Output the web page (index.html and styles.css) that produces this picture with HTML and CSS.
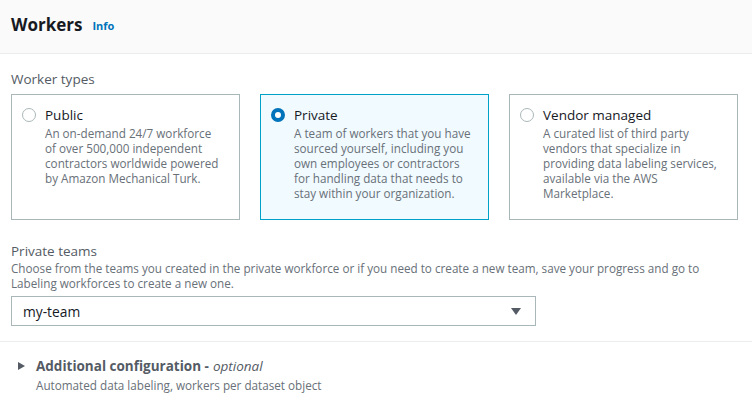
FILE: index.html
```html
<!DOCTYPE html>
<html lang="en">
<head>
<meta charset="utf-8">
<title>Workers</title>
<link rel="stylesheet" href="styles.css">
</head>
<body>
<div class="header">
  <h2 class="title">Workers</h2>
  <a class="info" href="#">Info</a>
</div>
<div class="content">
  <div class="label">Worker types</div>
  <div class="cards">
    <div class="card">
      <span class="radio"></span>
      <div class="card-body">
        <div class="card-title">Public</div>
        <div class="card-desc">An on-demand 24/7 workforce<br>of over 500,000 independent<br>contractors worldwide powered<br>by Amazon Mechanical Turk.</div>
      </div>
    </div>
    <div class="card selected">
      <span class="radio checked"></span>
      <div class="card-body">
        <div class="card-title">Private</div>
        <div class="card-desc">A team of workers that you have<br>sourced yourself, including you<br>own employees or contractors<br>for handling data that needs to<br>stay within your organization.</div>
      </div>
    </div>
    <div class="card">
      <span class="radio"></span>
      <div class="card-body">
        <div class="card-title">Vendor managed</div>
        <div class="card-desc">A curated list of third party<br>vendors that specialize in<br>providing data labeling services,<br>available via the AWS<br>Marketplace.</div>
      </div>
    </div>
  </div>
  <div class="label teams-label">Private teams</div>
  <div class="hint">Choose from the teams you created in the private workforce or if you need to create a new team, save your progress and go to<br>Labeling workforces to create a new one.</div>
  <div class="select">
    <span>my-team</span>
    <span class="caret-down"></span>
  </div>
</div>
<div class="expander">
  <div class="exp-title"><span class="caret-right"></span>Additional configuration - <em>optional</em></div>
  <div class="exp-desc">Automated data labeling, workers per dataset object</div>
</div>
</body>
</html>
```
FILE: styles.css
```css
* { box-sizing: border-box; }
body {
  margin: 0;
  font-family: "Open Sans", "Noto Sans", Arial, sans-serif;
  color: #16191f;
  background: #fff;
}
.header {
  height: 54px;
  display: flex;
  align-items: center;
  padding: 0 11px 4px;
  background: #fafafa;
  border-bottom: 1px solid #eaeded;
}
.title {
  margin: 0;
  font-size: 17px;
  font-weight: 700;
  line-height: 22px;
  color: #16191f;
}
.info {
  margin-left: 10px;
  margin-top: 2px;
  font-size: 11px;
  font-weight: 700;
  color: #0073bb;
  text-decoration: none;
}
.content {
  padding: 16px 14px 15px 11px;
  border-bottom: 1px solid #eaeded;
}
.label {
  font-size: 13.5px;
  line-height: 18px;
  color: #545b64;
}
.cards {
  display: grid;
  grid-template-columns: repeat(3, 1fr);
  gap: 20px;
  margin-top: 6px;
}
.card {
  display: flex;
  border: 1px solid #aab7b8;
  padding: 11px 6px 18px 10px;
}
.card.selected {
  border-color: #00a1c9;
  background: #f1faff;
}
.radio {
  flex: none;
  width: 14px;
  height: 14px;
  margin-top: 2px;
  border: 1px solid #aab7b8;
  border-radius: 50%;
  background: #fff;
}
.radio.checked {
  border: 4px solid #0073bb;
}
.card-body {
  margin-left: 9px;
}
.card-title {
  font-size: 13.5px;
  line-height: 18px;
  color: #16191f;
}
.card-desc {
  margin-top: 2px;
  font-size: 11.7px;
  line-height: 15px;
  color: #687078;
}
.teams-label {
  margin-top: 22px;
}
.hint {
  margin-top: 1px;
  font-size: 11.7px;
  line-height: 15px;
  color: #687078;
}
.select {
  width: 525px;
  height: 30px;
  margin-top: 5px;
  display: flex;
  align-items: center;
  justify-content: space-between;
  padding: 0 14px 0 11px;
  border: 1px solid #aab7b8;
  font-size: 13.8px;
  color: #16191f;
}
.caret-down {
  width: 0;
  height: 0;
  border-left: 5px solid transparent;
  border-right: 5px solid transparent;
  border-top: 7px solid #545b64;
}
.expander {
  padding: 15px 11px 0 18px;
}
.exp-title {
  display: flex;
  align-items: center;
  font-size: 13.5px;
  line-height: 18px;
  font-weight: 700;
  color: #545b64;
}
.exp-title em {
  font-weight: 400;
  margin-left: 4px;
}
.caret-right {
  width: 0;
  height: 0;
  margin-right: 11px;
  border-top: 4.5px solid transparent;
  border-bottom: 4.5px solid transparent;
  border-left: 7px solid #545b64;
}
.exp-desc {
  margin-top: 3px;
  margin-left: 18px;
  font-size: 11.7px;
  line-height: 15px;
  color: #687078;
}
```
